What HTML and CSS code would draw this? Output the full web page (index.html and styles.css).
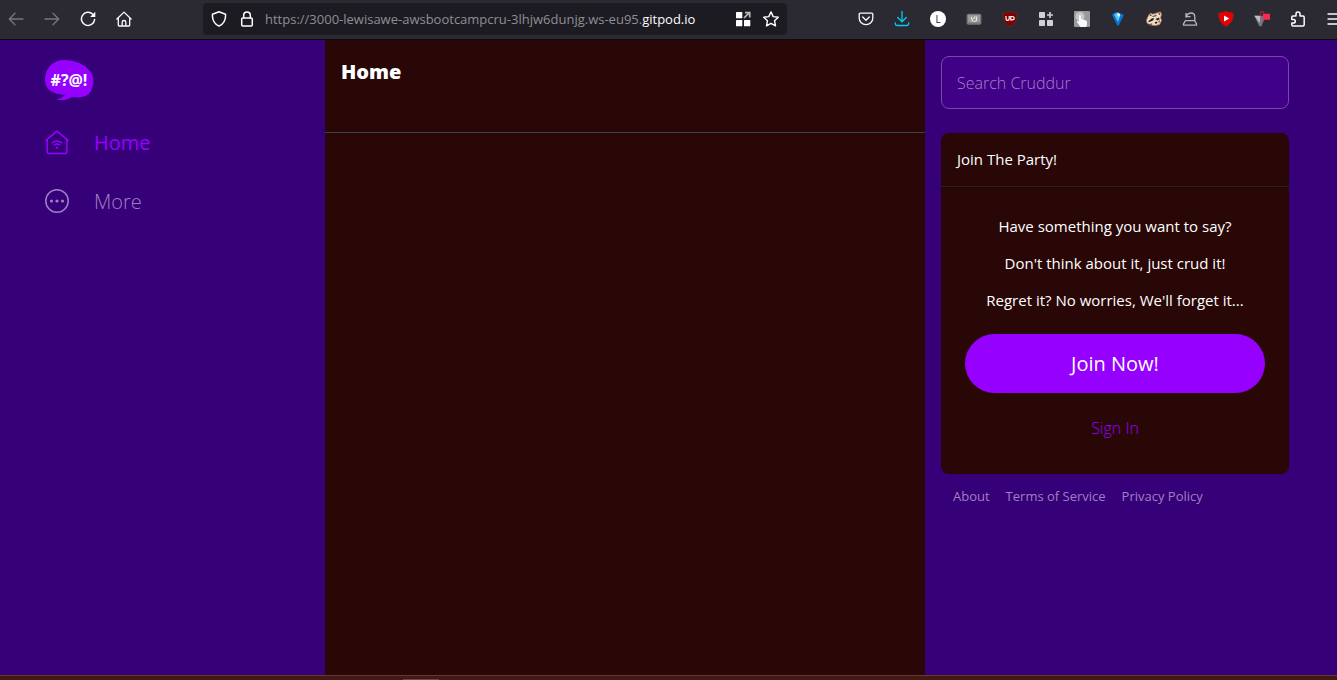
FILE: index.html
```html
<!DOCTYPE html>
<html lang="en">
<head>
<meta charset="utf-8">
<title>Cruddur</title>
<link rel="stylesheet" href="styles.css">
</head>
<body>
<header class="toolbar">
  <nav class="tools" aria-label="Navigation">
    <button class="tool tool-dim" aria-label="Back"><svg class="icon line" viewBox="0 0 16 16"><path d="M15 8H1.500M7 2.300L1.300 8L7 13.700"/></svg></button>
    <button class="tool tool-dim" aria-label="Forward"><svg class="icon line" viewBox="0 0 16 16"><path d="M1 8h13.500M9 2.300L14.700 8L9 13.700"/></svg></button>
    <button class="tool" aria-label="Reload"><svg class="icon line" viewBox="0 0 16 16"><path stroke-width="1.500" d="M12.800 3.300A6.600 6.600 0 1 0 14.600 8.600"/><path class="solid" d="M15.300.8v5.200H10.100z"/></svg></button>
    <button class="tool" aria-label="Home page"><svg class="icon line" viewBox="0 0 16 16"><path d="M.9 8L8 1.100L15.100 8M2.300 7v7.200q0 .8.800.8h9.800q.8 0 .8-.8V7M6.200 14.800v-3.600q0-1.700 1.800-1.700t1.800 1.700v3.600"/></svg></button>
  </nav>
  <div class="address">
    <button class="address-icon" aria-label="Tracking protection"><svg class="icon line" viewBox="0 0 16 16"><path stroke-width="1.500" d="M8 .8L14.500 3.300C15 9 12.500 13 8 15.200C3.500 13 1 9 1.500 3.300z"/></svg></button>
    <button class="address-icon" aria-label="Site security"><svg class="icon line" viewBox="0 0 16 16"><rect x="2.700" y="7" width="10.600" height="8" rx="1" stroke-width="1.500"/><path stroke-width="1.500" d="M4.700 7V4.200a3.300 3.300 0 0 1 6.600 0V7"/></svg></button>
    <a class="url" href="#">https://3000-lewisawe-awsbootcampcru-3lhjw6dunjg.ws-eu95.<span class="domain">gitpod.io</span></a>
    <button class="address-icon" aria-label="Containers"><svg class="icon" viewBox="0 0 16 16"><g fill="#fff"><rect x="1" y="1" width="6.300" height="6.300" rx=".6"/><rect x="1" y="9" width="6.300" height="6.300" rx=".6"/><rect x="9" y="9" width="6.300" height="6.300" rx=".6"/></g><path d="M9 7L13.500 2.500M10 1.600h4.700v4.800" fill="none" stroke="#bbb" stroke-width="1.700"/></svg></button>
    <button class="address-icon" aria-label="Bookmark"><svg class="icon line" viewBox="0 0 16 16"><path stroke-width="1.400" d="M8 .9L10.200 5.600L15.300 6.200L11.500 9.700L12.500 14.900L8 12.300L3.500 14.900L4.500 9.700L.7 6.200L5.800 5.600z"/></svg></button>
  </div>
  <nav class="tools extensions" aria-label="Extensions">
    <button class="tool" aria-label="Pocket"><svg class="icon line" viewBox="0 0 16 16"><path d="M2.300 2.200h11.400q1.100 0 1.100 1.100V7.300a6.800 6.300 0 0 1-13.600 0V3.300q0-1.100 1.100-1.100zM4.700 6l3.300 3.200L11.300 6"/></svg></button>
    <button class="tool tool-cyan" aria-label="Downloads"><svg class="icon line" viewBox="0 0 16 16"><path d="M8 .5v10M3.700 6.500L8 10.800l4.300-4.300M1.300 11.800v1q0 1.700 1.700 1.700h10q1.700 0 1.700-1.700v-1"/></svg></button>
    <button class="tool" aria-label="Account"><span class="avatar">L</span></button>
    <button class="tool" aria-label="Key remapper"><svg class="icon" viewBox="0 0 16 16"><rect x=".6" y="2.800" width="14.800" height="11" rx="2" fill="#777"/><rect x="2" y="4" width="12" height="7.500" rx="1" fill="#999"/><path d="M5.200 6l1.300 4M7.500 8l1.700-2.500M10.500 5.500v4.500M5.500 9.500l4.500 1" fill="none" stroke="#e6e6e6" stroke-width="1.200"/></svg></button>
    <button class="tool" aria-label="uBlock"><svg class="icon" viewBox="0 0 16 16"><path fill="#800000" stroke="#603030" stroke-width=".6" d="M8 .4Q11 2 15 2Q15.700 12 8 15.700Q.3 12 1 2Q5 2 8 .4z"/><path d="M4 5v2.700q0 1.600 1.600 1.600T7.200 7.700V5M8.800 5.500v3.300h1.400q2 0 2-1.650t-2-1.650z" fill="none" stroke="#fff" stroke-width="1.200"/></svg></button>
    <button class="tool" aria-label="Apps"><svg class="icon" viewBox="0 0 16 16"><g fill="#cfcfd8"><rect x="1" y="1" width="6" height="6" rx=".7"/><rect x="1" y="9" width="6" height="6" rx=".7"/><rect x="9" y="9" width="6" height="6" rx=".7"/><path d="M11.200 1h1.600v2.200H15v1.600h-2.200V7h-1.600V4.800H9V3.200h2.200z"/></g></svg></button>
    <button class="tool" aria-label="Click helper"><svg class="icon" viewBox="0 0 16 16"><rect width="16" height="16" rx="1" fill="#999b9b"/><circle cx="6" cy="5.500" r="4.500" fill="#c5c8c8"/><path fill="#f5f8ff" d="M5 4.500q1-1 2 0V8q2.500 0 5 1.500q1.300.8 1 2.500V14l-1 2H6.500L2.700 10.800q.7-1.600 2.300-.2z"/></svg></button>
    <button class="tool" aria-label="Pin"><svg class="icon" viewBox="0 0 16 16"><path fill="#0872c9" d="M2 3.800Q5 .3 8 1.300T14 4L8.800 14.500H7.200z"/><path fill="#54c8fa" d="M4 3.500L8 1.500l2.500 2.800L8 11z"/><path fill="#fff" d="M7 2.500h2.500l.8 1.500-2 2z"/></svg></button>
    <button class="tool" aria-label="Privacy Badger"><svg class="icon" viewBox="0 0 16 16"><path fill="#f2dcc5" stroke="#c98a55" stroke-width=".7" d="M.6 9L2.500 4.500l2-2.300 2.300 1L11 2l3.500-1 1 2.500-1 3 1 3-2 4-4 1-5-.6L1 12z"/><path fill="#28221f" d="M3.200 5.300l1.500-2 1.300 1zM12 3l2-1 .3 2zM2 10.500L6 7.200l2.300.2L7 9.500 3.500 11zM9.500 8L13 6.500l.7 1.700-2.500 1.300zM8.500 11.500l2-1 1.200 1.200-2 1.300zM12.500 10l1.500-.7-1 3zM3 13l3.500-.5L5 14z"/><path fill="#6f6a66" d="M6 5.500l4-2 1 1.500-4 1.200z"/></svg></button>
    <button class="tool tool-gray" aria-label="Session restore"><svg class="icon line" viewBox="0 0 16 16"><path d="M4 6.200V2.500M4 5.700h4M4.200 5.300Q6 2 9 2q3.800 0 3.800 4v3.500M3.500 9.700h9.300l1.700 3.200v1.300H1.500v-1.300z"/></svg></button>
    <button class="tool" aria-label="Video tools"><svg class="icon" viewBox="0 0 16 16"><path fill="#e60000" stroke="#a31b1b" stroke-width=".7" d="M8 .4Q12 1.500 15.300 2.300Q16 11 8 15.600Q0 11 .7 2.300Q4 1.500 8 .4z"/><path fill="#fff" d="M6 4.400v6L11.300 7.400z"/></svg></button>
    <button class="tool" aria-label="Filter"><svg class="icon" viewBox="0 0 16 16"><path fill="#74747b" d="M.3 4.800h11.500L7.400 15.200H5.200z"/><path fill="#bcbcc2" d="M.3 4.800h6L5.800 12z"/><rect x="9" y="2.800" width="7" height="6" rx=".5" fill="#ff294e"/><path d="M6.500 4V2q0-1.400 1.600-1.400T9.700 2v1" fill="none" stroke="#a92442" stroke-width="1.200"/></svg></button>
    <button class="tool" aria-label="Extensions"><svg class="icon line" viewBox="0 0 16 16"><path stroke-width="1.500" d="M1.800 6.200q0-1.200 1.200-1.200H6V3a2 2 0 0 1 4 0v2h3q1.200 0 1.200 1.200v7.600q0 1.200-1.200 1.200H3q-1.200 0-1.200-1.200V12h1.700a1.800 1.800 0 0 0 0-3.600H1.800z"/></svg></button>
    <button class="tool" aria-label="Menu"><svg class="icon line" viewBox="0 0 16 16"><path d="M2 3h13M2 8h13M2 13h13"/></svg></button>
  </nav>
</header>

<div class="app">
  <nav class="sidebar" aria-label="Main">
    <svg class="logo" viewBox="0 0 49 40" role="img" aria-label="Cruddur"><path fill="#9500ff" d="M0 20C0 8 8 0 19 0C28 0 37 3 42 8C48 13 50 20 47 28C46 33 42 36 37 37C34 38 30 37 27 37C22 40 17 41 11 39C15 39 18 37 20 35C9 34 0 30 0 20z"/><text class="logo-text" x="24" y="26" text-anchor="middle">#?@!</text></svg>
    <a class="nav-link nav-active" href="#"><svg class="nav-icon" viewBox="0 0 25 25"><path d="M1 10.300L12 1.200L23 10.300M2.200 9.500v12.600q0 1.500 1.500 1.500h16.600q1.500 0 1.500-1.500V9.500"/><path d="M7.500 12.700q4.500-3.600 9 0M9.300 15q2.700-2 5.400 0"/><circle class="dot" cx="12" cy="17.700" r="1.100"/></svg>Home</a>
    <a class="nav-link" href="#"><svg class="nav-icon" viewBox="0 0 25 25"><circle cx="12" cy="12" r="11.200"/><circle class="dot" cx="6.500" cy="12" r="1.600"/><circle class="dot" cx="12" cy="12" r="1.600"/><circle class="dot" cx="17.500" cy="12" r="1.600"/></svg>More</a>
  </nav>

  <main class="feed">
    <h1 class="feed-title">Home</h1>
  </main>

  <aside class="aside">
    <input class="search" type="text" placeholder="Search Cruddur" aria-label="Search Cruddur">
    <section class="card">
      <h2 class="card-title">Join The Party!</h2>
      <div class="card-body">
        <p class="card-text">Have something you want to say?</p>
        <p class="card-text">Don't think about it, just crud it!</p>
        <p class="card-text">Regret it? No worries, We'll forget it...</p>
        <button class="join">Join Now!</button>
        <a class="sign-in" href="#">Sign In</a>
      </div>
    </section>
    <footer class="links">
      <a class="link" href="#">About</a>
      <a class="link" href="#">Terms of Service</a>
      <a class="link" href="#">Privacy Policy</a>
    </footer>
  </aside>
</div>
<div class="taskbar"><div class="task"></div></div>
</body>
</html>
```
FILE: styles.css
```css
* { box-sizing: border-box; }

body {
  margin: 0;
  min-height: 100vh;
  display: flex;
  flex-direction: column;
  overflow-x: hidden;
  background: #360079;
  color: #fff;
  font: 300 16px/21px "Open Sans", "Noto Sans", sans-serif;
}

a { text-decoration: none; color: inherit; }
button { padding: 0; border: 0; background: none; color: inherit; font: inherit; cursor: pointer; }

.toolbar {
  display: flex;
  align-items: flex-start;
  justify-content: space-between;
  height: 40px;
  padding-top: 3px;
  overflow: hidden;
  background: #2b2a33;
  border-bottom: 1px solid #0c0c0d;
}
.tools { display: flex; gap: 4px; flex: none; }
.extensions { margin-right: -13px; }
.tool { display: grid; place-items: center; width: 32px; height: 32px; color: #fbfbfe; }
.tool-dim { color: #77767d; }
.tool-cyan { color: #00ccf0; }
.tool-gray { color: #b5b5ba; }
.icon { display: block; width: 16px; height: 16px; }
.line { fill: none; stroke: currentColor; stroke-width: 1.3; stroke-linecap: round; stroke-linejoin: round; }
.solid { fill: currentColor; stroke: none; }
.avatar {
  width: 16px;
  height: 16px;
  border-radius: 50%;
  background: #fff;
  color: #1c1b22;
  font-size: 10px;
  font-weight: 400;
  line-height: 16px;
}

.address {
  display: flex;
  align-items: center;
  flex: 0 1 584px;
  min-width: 0;
  height: 32px;
  margin: 0 auto;
  padding: 0 2px;
  border-radius: 4px;
  background: #1c1b22;
}
.address-icon { display: grid; place-items: center; flex: none; width: 28px; height: 32px; }
.url {
  flex: 1;
  min-width: 0;
  overflow: hidden;
  padding-left: 4px;
  color: #8f8e95;
  font-size: 13px;
  font-weight: 400;
  white-space: nowrap;
}
.domain { color: #fbfbfe; }

.app {
  flex: 1;
  display: grid;
  grid-template-columns: 325fr 600fr 412fr;
}

.sidebar { display: flex; flex-direction: column; padding: 20px 16px 20px 45px; }
.logo { width: 49px; height: 40px; margin-bottom: 13px; }
.logo-text { fill: #fff; font: 700 16px "Open Sans", sans-serif; }
.nav-link {
  display: flex;
  align-items: center;
  gap: 24px;
  padding: 16px 0;
  color: #a07fc2;
  font-size: 20px;
  line-height: 27px;
}
.nav-active { color: #9500ff; font-weight: 400; }
.nav-icon { width: 25px; height: 25px; fill: none; stroke: currentColor; stroke-width: 1.5; stroke-linecap: round; stroke-linejoin: round; }
.dot { fill: currentColor; stroke: none; }

.feed { background: #290707; }
.feed-title {
  margin: 0;
  padding: 16px 16px 44px;
  border-bottom: 1px solid #3a3f4d;
  font-size: 20px;
  font-weight: 800;
  line-height: 32px;
}

.aside { display: flex; flex-direction: column; padding: 16px 48px 16px 16px; }
.search {
  width: 100%;
  height: 53px;
  padding: 0 15px;
  border: 1px solid #7b45ac;
  border-radius: 8px;
  background: #400087;
  color: #fff;
  font: inherit;
}
.search::placeholder { color: #a77fc6; opacity: 1; }
.card { margin-top: 24px; border-radius: 8px; background: #290707; }
.card-title {
  margin: 0;
  padding: 16px;
  border-bottom: 1px solid #252321;
  font-size: 15px;
  font-weight: 400;
}
.card-body { display: flex; flex-direction: column; padding: 29px 24px 35px; text-align: center; }
.card-text { margin: 0 0 16px; font-size: 15px; font-weight: 400; }
.join {
  height: 59px;
  margin-top: 7px;
  border-radius: 30px;
  background: #9500ff;
  font-size: 20px;
  font-weight: 400;
}
.sign-in { align-self: center; margin-top: 25px; color: #9500ff; }
.links { display: flex; flex-wrap: wrap; gap: 16px; padding: 12px; color: #a07fc2; font-size: 13px; font-weight: 400; }

.taskbar { display: flex; align-items: flex-end; height: 5px; padding-left: 403px; background: #431914; border-top: 1px solid #633735; }
.task { width: 36px; height: 1px; background: #6b4a45; }
```
